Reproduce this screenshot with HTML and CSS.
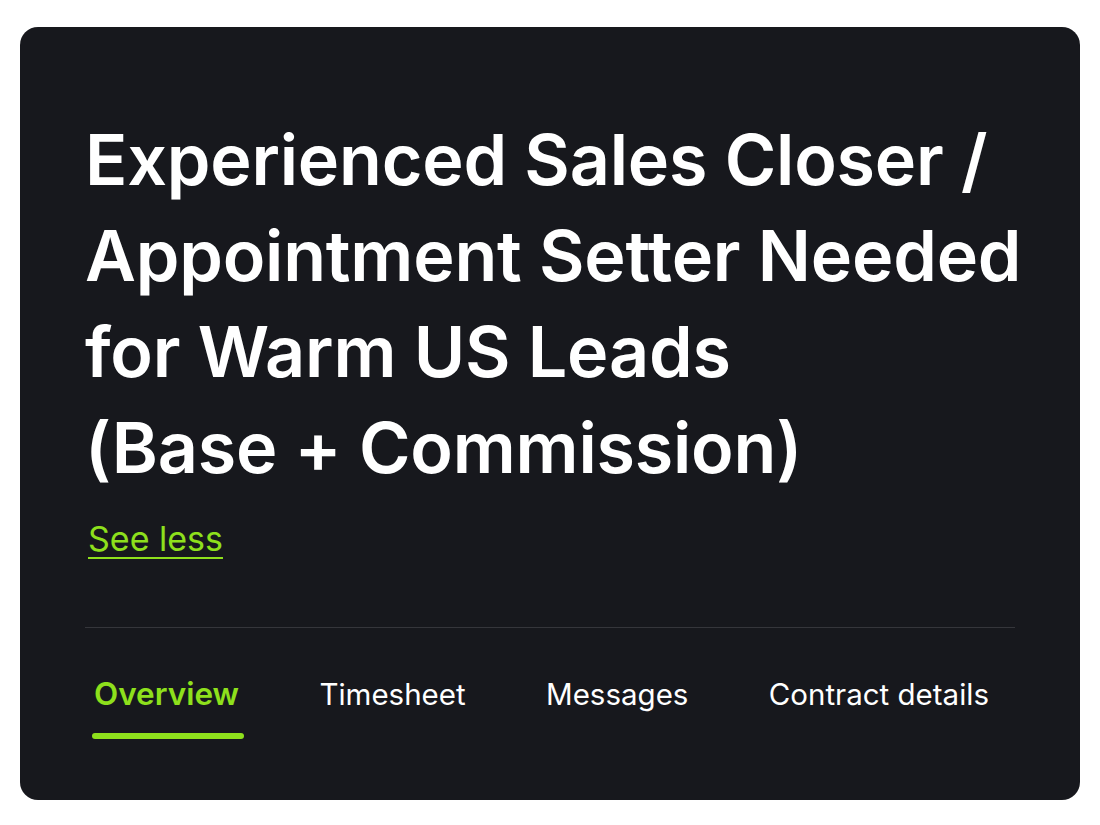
FILE: index.html
```html
<!DOCTYPE html>
<html lang="en">
<head>
  <meta charset="UTF-8" />
  <meta name="viewport" content="width=device-width, initial-scale=1" />
  <title>Job details</title>
  <link rel="stylesheet" href="styles.css">
</head>
<body>
  <main class="job-card">
    <h1 class="job-title">Experienced Sales Closer /<br>Appointment Setter Needed<br>for Warm US Leads<br>(Base + Commission)</h1>
    <a href="#" class="see-less">See less</a>

    <nav class="tabs" aria-label="Contract sections">
      <a href="#" class="tab active">Overview</a>
      <a href="#" class="tab">Timesheet</a>
      <a href="#" class="tab">Messages</a>
      <a href="#" class="tab">Contract details</a>
    </nav>
  </main>
</body>
</html>
```

FILE: styles.css
```css
body {
  margin: 0;
  background: #ffffff;
  font-family: Inter, 'Noto Sans', sans-serif;
  min-height: 100vh;
  padding: 27px 20px 0;
  box-sizing: border-box;
}

.job-card {
  background: #17181d;
  border-radius: 18px;
  padding: 85px 65px 0;
  height: 773px;
  box-sizing: border-box;
  display: flex;
  flex-direction: column;
  align-items: flex-start;
}

.job-title {
  margin: 0;
  color: #ffffff;
  font-size: 70px;
  font-weight: 600;
  line-height: 96px;
  letter-spacing: -0.2px;
  white-space: nowrap;
}

.see-less {
  margin-top: 23px;
  margin-left: 3px;
  color: #8ee01c;
  font-size: 34px;
  line-height: 40px;
  text-decoration: underline;
  text-decoration-thickness: 2px;
  text-underline-offset: 6px;
}

/* Tab strip under the divider */
.tabs {
  align-self: stretch;
  margin-top: 68px;
  border-top: 1px solid #35363b;
  padding: 46px 26px 0 9px;
  display: flex;
  justify-content: space-between;
}

.tab {
  color: #ffffff;
  font-size: 29.5px;
  line-height: 40px;
  text-decoration: none;
  padding-bottom: 25px;
  position: relative;
}

.tab.active {
  color: #8ee01c;
  font-size: 31.5px;
  font-weight: 600;
}

.tab.active::after {
  content: '';
  position: absolute;
  left: -2px;
  right: -5px;
  bottom: 0;
  height: 6px;
  border-radius: 3px;
  background: #8ee01c;
}
```
